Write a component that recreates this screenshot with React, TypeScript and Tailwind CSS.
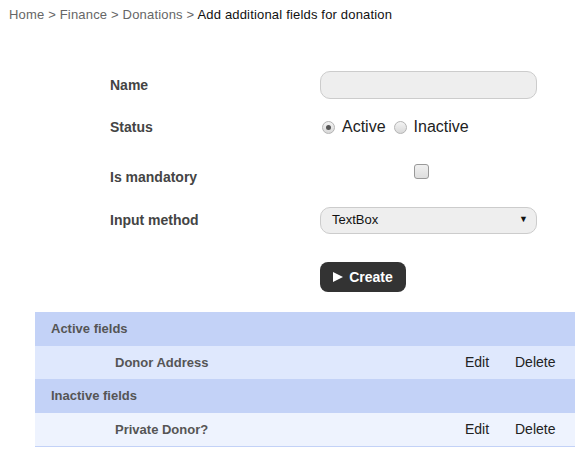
import React from 'react';

const fields = {
  active: [{ id: 1, name: 'Donor Address' }],
  inactive: [{ id: 2, name: 'Private Donor?' }],
};

function Radio({ checked, label }: { checked?: boolean; label: string }) {
  return (
    <label className="flex items-center">
      <span className="w-[13px] h-[13px] rounded-full border border-[#b4b4b4] bg-gradient-to-b from-[#f4f4f4] to-[#d8d8d8] flex items-center justify-center">
        {checked && <span className="w-[5px] h-[5px] rounded-full bg-[#555]" />}
      </span>
      <span className="ml-[7px] text-[16px] text-[#222]">{label}</span>
    </label>
  );
}

function Section({ title, items, rowBg }: { title: string; items: { id: number; name: string }[]; rowBg: string }) {
  return (
    <>
      <div className="h-[34px] flex items-center pl-[16px] bg-[#c3d2f7] text-[13px] font-bold text-[#555]">{title}</div>
      {items.map(item => (
        <div key={item.id} className={`h-[33px] flex items-center ${rowBg}`}>
          <span className="pl-[80px] flex-1 text-[13px] font-bold text-[#555]">{item.name}</span>
          <span className="w-[50px] text-[14px] text-[#222]">Edit</span>
          <span className="w-[60px] text-[14px] text-[#222]">Delete</span>
        </div>
      ))}
    </>
  );
}

export default function App() {
  return (
    <div className="w-[575px] h-[450px] overflow-hidden bg-white font-['Liberation_Sans',Arial,sans-serif]">
      <div className="pt-[7px] pl-[9px] text-[13px] leading-[16px] tracking-[0.18px] text-[#666]">
        Home &gt; Finance &gt; Donations &gt; <span className="text-[#111]">Add additional fields for donation</span>
      </div>

      <div className="mt-[48px] pl-[110px] text-[14px] font-bold text-[#444]">
        <div className="flex items-center h-[28px]">
          <span className="w-[210px]">Name</span>
          <div className="w-[217px] h-[28px] rounded-[10px] border border-[#ccc] bg-[#eee]" />
        </div>

        <div className="flex items-center h-[28px] mt-[14px]">
          <span className="w-[212px]">Status</span>
          <div className="flex items-center gap-[8px] font-normal">
            <Radio checked label="Active" />
            <Radio label="Inactive" />
          </div>
        </div>

        <div className="flex h-[28px] mt-[22px]">
          <span className="w-[304px] self-center">Is mandatory</span>
          <span className="w-[15px] h-[15px] mt-[1px] rounded-[3px] border border-[#999] bg-gradient-to-b from-[#f0f0f0] to-[#dedede]" />
        </div>

        <div className="flex items-center h-[28px] mt-[15px]">
          <span className="w-[210px]">Input method</span>
          <div className="w-[217px] h-[27px] rounded-[10px] border border-[#ccc] bg-[#eee] flex items-center justify-between pl-[11px] pr-[8px] text-[13px] font-normal text-[#111]">
            <span>TextBox</span>
            <span className="text-[9px]">▼</span>
          </div>
        </div>

        <div className="flex mt-[28px]">
          <span className="w-[210px]" />
          <button className="w-[86px] h-[30px] rounded-[8px] bg-[#333] text-white text-[14px] font-bold flex items-center justify-center gap-[6px]">
            <svg width="10" height="10" viewBox="0 0 10 10">
              <path d="M0 0 L10 5 L0 10 Z" fill="white" />
            </svg>
            Create
          </button>
        </div>
      </div>

      <div className="mt-[20px] ml-[35px] border-b border-[#c3d2f7]">
        <Section title="Active fields" items={fields.active} rowBg="bg-[#dfe8fd]" />
        <Section title="Inactive fields" items={fields.inactive} rowBg="bg-[#eef3fe]" />
      </div>
    </div>
  );
}
